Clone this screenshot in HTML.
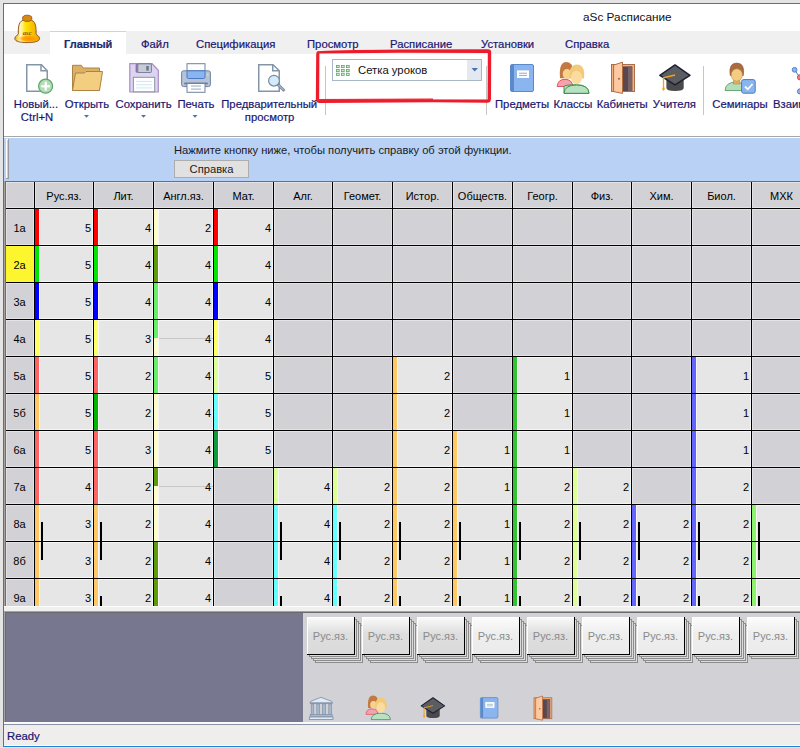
<!DOCTYPE html>
<html><head><meta charset="utf-8">
<style>
html,body{margin:0;padding:0;}
body{width:800px;height:748px;overflow:hidden;position:relative;background:#e4e4e4;font-family:"Liberation Sans",sans-serif;}
div,span,svg{position:absolute;}
span{white-space:nowrap;line-height:1;}
.win{left:3px;top:3px;width:820px;height:742px;border:1px solid #1883d7;border-right:none;background:#fff;}
.tab{font-size:11.3px;color:#1a1670;top:39px;-webkit-text-stroke:0.2px #1a1670;}
.rb{font-size:11.3px;color:#1a1670;-webkit-text-stroke:0.2px #1a1670;}
.grid{overflow:hidden;background:#d2d1d6;}
.grid div{position:absolute;}
.grid span{position:absolute;font-size:11px;color:#000;line-height:13px;}
.grid .hd{text-align:center;color:#000;}
.grid .rh{text-align:center;color:#000;}
.grid .val{text-align:right;}
</style></head><body>
<div class="win"></div>
<!-- title -->
<span style="left:583px;top:12px;font-size:11.8px;color:#111;">aSc Расписание</span>
<!-- tab strip -->
<div style="left:4px;top:31px;width:796px;height:23px;background:#f0f0f0;"></div>
<div style="left:50px;top:31px;width:76px;height:23px;background:#fff;border-top:1px solid #d2d2d2;box-sizing:border-box;"></div>
<span class="tab" style="left:64px;font-weight:bold;font-size:11px;color:#1b2f6e;">Главный</span>
<span class="tab" style="left:141px;">Файл</span>
<span class="tab" style="left:196px;">Спецификация</span>
<span class="tab" style="left:307px;">Просмотр</span>
<span class="tab" style="left:390px;">Расписание</span>
<span class="tab" style="left:481px;">Установки</span>
<span class="tab" style="left:565px;">Справка</span>
<svg style="left:0;top:0" width="60" height="60" viewBox="0 0 60 60">
<defs>
<linearGradient id="bg1" x1="0" x2="1" y1="0" y2="0">
<stop offset="0" stop-color="#f0a800"/><stop offset="0.22" stop-color="#fff8c0"/><stop offset="0.45" stop-color="#ffe000"/><stop offset="1" stop-color="#f0a000"/>
</linearGradient>
<radialGradient id="bg2" cx="0.5" cy="0.5" r="0.5">
<stop offset="0" stop-color="#ff8c00"/><stop offset="0.6" stop-color="#ff9c00" stop-opacity="0.8"/><stop offset="1" stop-color="#ffb000" stop-opacity="0"/>
</radialGradient>
</defs>
<path d="M18.3 33.5 C18 22.5 20.5 19.6 27.2 19.6 C34 19.6 36.4 22.5 36.1 33.5 C36 35.2 39.6 35.8 39.6 38.6 C39.6 41.6 33.5 42.6 27.2 42.6 C21 42.6 14.8 41.6 14.8 38.6 C14.8 35.8 18.5 35.2 18.5 33.5 Z" fill="url(#bg1)" stroke="#8a4a10" stroke-width="0.9"/>
<ellipse cx="28.5" cy="38.6" rx="10.5" ry="3.8" fill="url(#bg2)"/>
<ellipse cx="27.2" cy="18.3" rx="4.7" ry="3.1" fill="#d88a10" stroke="#8a4a10" stroke-width="0.8"/>
<text x="27.2" y="34.6" font-family="Liberation Serif" font-size="6.5" fill="#8a4a18" text-anchor="middle" font-weight="bold" font-style="italic">asc</text>
</svg>

<!-- ribbon -->
<div style="left:4px;top:136px;width:796px;height:1px;background:#a6a6a6;"></div>
<svg style="left:0;top:0" width="800" height="140" viewBox="0 0 800 140">
<!-- separators -->
<rect x="325" y="66" width="1" height="49" fill="#c6c6c6"/>
<rect x="486" y="66" width="1" height="49" fill="#c6c6c6"/>
<rect x="703" y="66" width="1" height="49" fill="#c6c6c6"/>
<!-- new doc -->
<path d="M26.75 64.75 H41.5 L47.25 70.75 V91.25 H26.75 Z" fill="#fff" stroke="#8595a8" stroke-width="1.5"/>
<path d="M41 65 V70.75 H47" fill="none" stroke="#8595a8" stroke-width="1.5"/>
<circle cx="45.6" cy="86.2" r="7" fill="#b2dbb6" stroke="#5aa56a" stroke-width="1.2"/>
<rect x="44.6" y="81.8" width="2.2" height="8.8" fill="#fff"/>
<rect x="41.2" y="85.2" width="8.8" height="2.2" fill="#fff"/>
<!-- folder -->
<path d="M72.5 65.3 H81.3 L83.2 68 H99.5 V90.5 H72.5 Z" fill="#ddb068" stroke="#ab8444" stroke-width="1"/>
<path d="M75.5 73 H84.5 L86 71.5 H102.5 L99.5 90.5 H72.5 Z" fill="#f3cd80" stroke="#ab8444" stroke-width="1"/>
<!-- floppy -->
<path d="M129.8 63.6 H152 L158.3 70.3 V92 H129.8 Z" fill="#ddd4f2" stroke="#a98cc4" stroke-width="1.2"/>
<rect x="135.6" y="63.6" width="16" height="9.2" rx="1.5" fill="#8e74ae"/>
<rect x="137.8" y="63.9" width="13.6" height="8.6" rx="1" fill="#c9ccd6" stroke="#7a8496" stroke-width="1"/>
<rect x="146.2" y="66" width="2.6" height="4.6" fill="#6a7890"/>
<rect x="133.4" y="77.3" width="21.3" height="14.5" fill="#fff" stroke="#8894a6" stroke-width="1"/>
<rect x="136" y="80.9" width="16" height="1" fill="#cde6f8"/>
<rect x="136" y="84.3" width="16" height="1" fill="#cde6f8"/>
<rect x="136" y="87.4" width="16" height="1" fill="#cde6f8"/>
<!-- printer -->
<rect x="187" y="63.7" width="18" height="8" fill="#fff" stroke="#6e82a0" stroke-width="1"/>
<rect x="181.6" y="70.8" width="28.8" height="15.8" rx="2" fill="#b5c3d9" stroke="#6e82a0" stroke-width="1"/>
<path d="M187 70.8 H205 V77 Q205 78.5 203.5 78.5 H188.5 Q187 78.5 187 77 Z" fill="#8ab5f0" stroke="#4b79c2" stroke-width="1"/>
<circle cx="207.6" cy="74.7" r="1" fill="#f7e06a"/>
<rect x="184" y="82.6" width="24" height="2" rx="1" fill="#6e82a0"/>
<rect x="187" y="83.5" width="18" height="8.8" fill="#fff" stroke="#6e82a0" stroke-width="1"/>
<rect x="191" y="85.5" width="10" height="1" fill="#9aaabb"/>
<rect x="191" y="88.6" width="10" height="1" fill="#9aaabb"/>
<!-- preview -->
<path d="M258.75 64.75 H273 L279.25 70.75 V91.25 H258.75 Z" fill="#fff" stroke="#8595a8" stroke-width="1.5"/>
<path d="M272.75 65 V70.75 H279" fill="none" stroke="#8595a8" stroke-width="1.5"/>
<line x1="278" y1="84.5" x2="283.5" y2="90" stroke="#7a8aa0" stroke-width="3" stroke-linecap="round"/>
<line x1="278" y1="84.5" x2="283.5" y2="90" stroke="#c0d4e6" stroke-width="1"/>
<circle cx="274" cy="80.7" r="5.4" fill="#d3ebfc" stroke="#7a8aa0" stroke-width="1.2"/>
<!-- combo -->
<rect x="332.5" y="59.5" width="149" height="21" fill="#fff" stroke="#a9b5c9" stroke-width="1"/>
<rect x="467" y="60" width="14" height="20" fill="#e4e8f1"/>
<path d="M471.5 68 H478 L474.75 71.5 Z" fill="#4a72b0"/>
<g fill="#d8eed8" stroke="#5fa467" stroke-width="0.8"><rect x="336.4" y="65.4" width="2.8" height="2.2"/><rect x="341.4" y="65.4" width="2.8" height="2.2"/><rect x="346.4" y="65.4" width="2.8" height="2.2"/><rect x="336.4" y="69.4" width="2.8" height="2.2"/><rect x="341.4" y="69.4" width="2.8" height="2.2"/><rect x="346.4" y="69.4" width="2.8" height="2.2"/><rect x="336.4" y="73.2" width="2.8" height="2.2"/><rect x="341.4" y="73.2" width="2.8" height="2.2"/><rect x="346.4" y="73.2" width="2.8" height="2.2"/></g>
<!-- dropdown arrows -->
<path d="M84 115 H89 L86.5 117.8 Z" fill="#4a72b0"/>
<path d="M141 115 H146 L143.5 117.8 Z" fill="#4a72b0"/>
<path d="M192.5 115 H197.5 L195 117.8 Z" fill="#4a72b0"/>
<!-- book -->
<rect x="510.5" y="64.5" width="23" height="27" rx="1.5" fill="#8ab5ee" stroke="#5b89c9" stroke-width="1"/>
<rect x="511" y="65" width="3" height="26" fill="#5b89c9"/>
<rect x="517" y="70.4" width="12" height="7.6" fill="#fff"/>
<rect x="519" y="72.7" width="8" height="1" fill="#9aabc2"/>
<rect x="519" y="74.9" width="8" height="1" fill="#9aabc2"/>
<!-- classes -->
<path d="M557.2 86.5 Q557.5 79.5 565 79.3 Q572.5 79.5 572.8 86.5 Z" fill="#f4a3ac" stroke="#e04656" stroke-width="0.9"/>
<path d="M560 78.3 Q558.5 62 566.5 62 Q573.5 62.5 573 72 L571 78.3 Z" fill="#c37a42"/>
<ellipse cx="567" cy="74" rx="4.3" ry="5" fill="#f8d28c"/>
<path d="M564 86.5 Q564.5 84.8 576.5 84.8 Q588.5 84.8 589 93.3 H564 Z" fill="#b8e1c2" stroke="#2c8c3e" stroke-width="0.9"/>
<path d="M564 93.3 Q564.5 85 576.5 85 Q588.5 85 589 93.3 Z" fill="#b8e1c2" stroke="#2c8c3e" stroke-width="0.9"/>
<path d="M569.5 78.5 Q568.5 64.5 577 64.5 Q585.5 64.8 584 78.5 Z" fill="#f2ca7c"/>
<ellipse cx="576.5" cy="77.5" rx="5.5" ry="6.8" fill="#fcdc9e"/>
<!-- door -->
<rect x="611.5" y="64.5" width="23" height="27" fill="#f2b282" stroke="#b26c42" stroke-width="1"/>
<rect x="622.8" y="66.4" width="9.6" height="24.6" fill="#5a484c"/>
<rect x="628" y="66.4" width="4" height="24.6" fill="#7a6268"/>
<path d="M613.6 65.1 L622.5 62.2 V93.4 L613.6 91.6 Z" fill="#fdc9a2" stroke="#b26c42" stroke-width="1"/>
<circle cx="619" cy="78.8" r="1" fill="#a06040"/>
<!-- hat -->
<path d="M666.4 79.8 V88 Q666.4 91 675 91 Q683.7 91 683.7 88 V79.8 Z" fill="#4a4a4c"/>
<path d="M675 64.9 L690 75.3 L675 84.9 L659.8 75.3 Z" fill="#5b5d61" stroke="#1b2131" stroke-width="1.4" stroke-linejoin="round"/>
<path d="M675 75 L663.5 77.8 V88" fill="none" stroke="#f2a222" stroke-width="1.3"/>
<path d="M663.5 86 L665 89 L663.5 91 L662 89 Z" fill="#f2a222"/>
<!-- seminar -->
<path d="M725 90.5 Q725.5 82 736.5 82 Q744 82 744 90.5 Z" fill="#b5ddb9" stroke="#5aa26a" stroke-width="0.9"/>
<path d="M730.2 75.5 Q728.2 63 736.8 63 Q745.2 63 743.4 75.5 Z" fill="#a96b41" stroke="#8a5030" stroke-width="0.5"/>
<rect x="733.5" y="78" width="6.4" height="6" fill="#e2ae5e" stroke="#b08040" stroke-width="0.5"/>
<ellipse cx="736.8" cy="75" rx="5.6" ry="6.2" fill="#f5cd80" stroke="#b08040" stroke-width="0.5"/>
<rect x="741.6" y="79.6" width="13.6" height="13.6" rx="2" fill="#8ab5ee" stroke="#4b79c2" stroke-width="1"/>
<path d="M745 86.5 L747.8 89.3 L752.5 84" fill="none" stroke="#fff" stroke-width="1.8"/>
<!-- network partial -->
<line x1="794.6" y1="69.8" x2="799.7" y2="77.3" stroke="#4b79c2" stroke-width="1"/>
<circle cx="794.6" cy="69.8" r="2.4" fill="#8ab5ee" stroke="#4b79c2" stroke-width="0.9"/>
<circle cx="800" cy="77.3" r="2.6" fill="#f07a80" stroke="#d64050" stroke-width="0.9"/>
<circle cx="800" cy="91.4" r="2.6" fill="#8ab5ee" stroke="#4b79c2" stroke-width="0.9"/>
<!-- red annotation -->
<g fill="#ec1c2c">
<path d="M317.5 51.2 Q330 50.2 400 49.6 L488 49.2 Q491.2 49.4 491.2 52.2 L491 98.8 Q490.8 102.8 487.5 102.8 L433 102.2 L320 103 Q316 103 315.8 99.5 L316.2 53.8 Q316.6 51.4 317.5 51.2 Z M319.4 53.6 L319.2 99.2 L487.6 99.6 L487.8 53 L400 52.8 Z" fill-rule="evenodd"/>
<path d="M316 99 L433 98.6 L433 100 L316 100.6 Z" fill="#ee2834"/>
</g>
</svg>
<span class="rb" style="left:6px;top:99px;width:60px;text-align:center;">Новый...</span>
<span class="rb" style="left:7px;top:112px;width:60px;text-align:center;">Ctrl+N</span>
<span class="rb" style="left:57px;top:99px;width:60px;text-align:center;">Открыть</span>
<span class="rb" style="left:113.6px;top:99px;width:60px;text-align:center;">Сохранить</span>
<span class="rb" style="left:166px;top:99px;width:60px;text-align:center;">Печать</span>
<span class="rb" style="left:219.2px;top:99px;width:100px;text-align:center;">Предварительный</span>
<span class="rb" style="left:219.6px;top:112px;width:100px;text-align:center;">просмотр</span>
<span style="left:358px;top:65px;font-size:11.3px;color:#111;">Сетка уроков</span>
<span class="rb" style="left:492px;top:99px;width:60px;text-align:center;">Предметы</span>
<span class="rb" style="left:542.9px;top:99px;width:60px;text-align:center;">Классы</span>
<span class="rb" style="left:592.2px;top:99px;width:60px;text-align:center;">Кабинеты</span>
<span class="rb" style="left:644.4px;top:99px;width:60px;text-align:center;">Учителя</span>
<span class="rb" style="left:710px;top:99px;width:60px;text-align:center;">Семинары</span>
<span class="rb" style="left:773px;top:99px;">Взаимо</span>

<!-- help bar -->
<div style="left:4px;top:137px;width:796px;height:1px;background:#fff;"></div>
<div style="left:4px;top:138px;width:796px;height:43px;background:#b9d1f5;"></div>
<div style="left:6px;top:139px;width:1px;height:39px;background:#fff;"></div><div style="left:6px;top:139px;width:2px;height:1px;background:#fff;"></div><div style="left:8px;top:139px;width:1px;height:40px;background:#9a9a9a;"></div><div style="left:6px;top:178px;width:3px;height:1px;background:#9a9a9a;"></div>
<span style="left:174px;top:145px;font-size:11.2px;color:#1a1a1a;">Нажмите кнопку ниже, чтобы получить справку об этой функции.</span>
<div style="left:174px;top:160px;width:75px;height:18px;background:#e1e1e1;border:1px solid #adadad;box-sizing:border-box;"></div>
<span style="left:174px;top:164px;width:75px;text-align:center;font-size:11.2px;color:#1a1a1a;">Справка</span>
<div style="left:4px;top:181px;width:1px;height:425px;background:#a8a29c;"></div>
<div class="grid" style="left:5px;top:181px;width:795px;height:425px">
<div style="left:1px;top:1px;width:28px;height:26px;background:#d2d1d6;box-shadow:inset 0 0 0 1px #e3e2e7"></div>
<div style="left:30px;top:1px;width:58px;height:26px;background:#d2d1d6;box-shadow:inset 0 0 0 1px #e3e2e7"></div>
<div style="left:89px;top:1px;width:59px;height:26px;background:#d2d1d6;box-shadow:inset 0 0 0 1px #e3e2e7"></div>
<div style="left:149px;top:1px;width:59px;height:26px;background:#d2d1d6;box-shadow:inset 0 0 0 1px #e3e2e7"></div>
<div style="left:209px;top:1px;width:59px;height:26px;background:#d2d1d6;box-shadow:inset 0 0 0 1px #e3e2e7"></div>
<div style="left:269px;top:1px;width:58px;height:26px;background:#d2d1d6;box-shadow:inset 0 0 0 1px #e3e2e7"></div>
<div style="left:328px;top:1px;width:59px;height:26px;background:#d2d1d6;box-shadow:inset 0 0 0 1px #e3e2e7"></div>
<div style="left:388px;top:1px;width:59px;height:26px;background:#d2d1d6;box-shadow:inset 0 0 0 1px #e3e2e7"></div>
<div style="left:448px;top:1px;width:59px;height:26px;background:#d2d1d6;box-shadow:inset 0 0 0 1px #e3e2e7"></div>
<div style="left:508px;top:1px;width:59px;height:26px;background:#d2d1d6;box-shadow:inset 0 0 0 1px #e3e2e7"></div>
<div style="left:568px;top:1px;width:58px;height:26px;background:#d2d1d6;box-shadow:inset 0 0 0 1px #e3e2e7"></div>
<div style="left:627px;top:1px;width:59px;height:26px;background:#d2d1d6;box-shadow:inset 0 0 0 1px #e3e2e7"></div>
<div style="left:687px;top:1px;width:59px;height:26px;background:#d2d1d6;box-shadow:inset 0 0 0 1px #e3e2e7"></div>
<div style="left:747px;top:1px;width:59px;height:26px;background:#d2d1d6;box-shadow:inset 0 0 0 1px #e3e2e7"></div>
<div style="left:1px;top:28px;width:28px;height:36px;background:#d2d1d6;box-shadow:inset 0 0 0 1px #e3e2e7"></div>
<span class="rh" style="left:0px;top:41px;width:29px">1a</span>
<div style="left:30px;top:28px;width:58px;height:36px;background:#e6e6e6;box-shadow:inset 0 0 0 1px #f6f6f6"></div>
<div style="left:30px;top:28px;width:4px;height:36px;background:#ff0000"></div>
<div style="left:34px;top:28px;width:1px;height:36px;background:#f6f6f6"></div>
<span class="val" style="left:30px;top:41px;width:56px">5</span>
<div style="left:89px;top:28px;width:59px;height:36px;background:#e6e6e6;box-shadow:inset 0 0 0 1px #f6f6f6"></div>
<div style="left:89px;top:28px;width:4px;height:36px;background:#ff0000"></div>
<div style="left:93px;top:28px;width:1px;height:36px;background:#f6f6f6"></div>
<span class="val" style="left:89px;top:41px;width:57px">4</span>
<div style="left:149px;top:28px;width:59px;height:36px;background:#e6e6e6;box-shadow:inset 0 0 0 1px #f6f6f6"></div>
<div style="left:149px;top:28px;width:4px;height:36px;background:#fffcc6"></div>
<div style="left:153px;top:28px;width:1px;height:36px;background:#f6f6f6"></div>
<span class="val" style="left:149px;top:41px;width:57px">2</span>
<div style="left:209px;top:28px;width:59px;height:36px;background:#e6e6e6;box-shadow:inset 0 0 0 1px #f6f6f6"></div>
<div style="left:209px;top:28px;width:4px;height:36px;background:#ff0000"></div>
<div style="left:213px;top:28px;width:1px;height:36px;background:#f6f6f6"></div>
<span class="val" style="left:209px;top:41px;width:57px">4</span>
<div style="left:269px;top:28px;width:58px;height:36px;background:#d2d1d6;box-shadow:inset 0 0 0 1px #e3e2e7"></div>
<div style="left:328px;top:28px;width:59px;height:36px;background:#d2d1d6;box-shadow:inset 0 0 0 1px #e3e2e7"></div>
<div style="left:388px;top:28px;width:59px;height:36px;background:#d2d1d6;box-shadow:inset 0 0 0 1px #e3e2e7"></div>
<div style="left:448px;top:28px;width:59px;height:36px;background:#d2d1d6;box-shadow:inset 0 0 0 1px #e3e2e7"></div>
<div style="left:508px;top:28px;width:59px;height:36px;background:#d2d1d6;box-shadow:inset 0 0 0 1px #e3e2e7"></div>
<div style="left:568px;top:28px;width:58px;height:36px;background:#d2d1d6;box-shadow:inset 0 0 0 1px #e3e2e7"></div>
<div style="left:627px;top:28px;width:59px;height:36px;background:#d2d1d6;box-shadow:inset 0 0 0 1px #e3e2e7"></div>
<div style="left:687px;top:28px;width:59px;height:36px;background:#d2d1d6;box-shadow:inset 0 0 0 1px #e3e2e7"></div>
<div style="left:747px;top:28px;width:59px;height:36px;background:#d2d1d6;box-shadow:inset 0 0 0 1px #e3e2e7"></div>
<div style="left:1px;top:65px;width:28px;height:36px;background:#fdf62e"></div>
<span class="rh" style="left:0px;top:78px;width:29px">2a</span>
<div style="left:30px;top:65px;width:58px;height:36px;background:#e6e6e6;box-shadow:inset 0 0 0 1px #f6f6f6"></div>
<div style="left:30px;top:65px;width:4px;height:36px;background:#00e600"></div>
<div style="left:34px;top:65px;width:1px;height:36px;background:#f6f6f6"></div>
<span class="val" style="left:30px;top:78px;width:56px">5</span>
<div style="left:89px;top:65px;width:59px;height:36px;background:#e6e6e6;box-shadow:inset 0 0 0 1px #f6f6f6"></div>
<div style="left:89px;top:65px;width:4px;height:36px;background:#00e600"></div>
<div style="left:93px;top:65px;width:1px;height:36px;background:#f6f6f6"></div>
<span class="val" style="left:89px;top:78px;width:57px">4</span>
<div style="left:149px;top:65px;width:59px;height:36px;background:#e6e6e6;box-shadow:inset 0 0 0 1px #f6f6f6"></div>
<div style="left:149px;top:65px;width:4px;height:36px;background:#5e9a0a"></div>
<div style="left:153px;top:65px;width:1px;height:36px;background:#f6f6f6"></div>
<span class="val" style="left:149px;top:78px;width:57px">4</span>
<div style="left:209px;top:65px;width:59px;height:36px;background:#e6e6e6;box-shadow:inset 0 0 0 1px #f6f6f6"></div>
<div style="left:209px;top:65px;width:4px;height:36px;background:#00e600"></div>
<div style="left:213px;top:65px;width:1px;height:36px;background:#f6f6f6"></div>
<span class="val" style="left:209px;top:78px;width:57px">4</span>
<div style="left:269px;top:65px;width:58px;height:36px;background:#d2d1d6;box-shadow:inset 0 0 0 1px #e3e2e7"></div>
<div style="left:328px;top:65px;width:59px;height:36px;background:#d2d1d6;box-shadow:inset 0 0 0 1px #e3e2e7"></div>
<div style="left:388px;top:65px;width:59px;height:36px;background:#d2d1d6;box-shadow:inset 0 0 0 1px #e3e2e7"></div>
<div style="left:448px;top:65px;width:59px;height:36px;background:#d2d1d6;box-shadow:inset 0 0 0 1px #e3e2e7"></div>
<div style="left:508px;top:65px;width:59px;height:36px;background:#d2d1d6;box-shadow:inset 0 0 0 1px #e3e2e7"></div>
<div style="left:568px;top:65px;width:58px;height:36px;background:#d2d1d6;box-shadow:inset 0 0 0 1px #e3e2e7"></div>
<div style="left:627px;top:65px;width:59px;height:36px;background:#d2d1d6;box-shadow:inset 0 0 0 1px #e3e2e7"></div>
<div style="left:687px;top:65px;width:59px;height:36px;background:#d2d1d6;box-shadow:inset 0 0 0 1px #e3e2e7"></div>
<div style="left:747px;top:65px;width:59px;height:36px;background:#d2d1d6;box-shadow:inset 0 0 0 1px #e3e2e7"></div>
<div style="left:1px;top:102px;width:28px;height:36px;background:#d2d1d6;box-shadow:inset 0 0 0 1px #e3e2e7"></div>
<span class="rh" style="left:0px;top:115px;width:29px">3a</span>
<div style="left:30px;top:102px;width:58px;height:36px;background:#e6e6e6;box-shadow:inset 0 0 0 1px #f6f6f6"></div>
<div style="left:30px;top:102px;width:4px;height:36px;background:#0000ff"></div>
<div style="left:34px;top:102px;width:1px;height:36px;background:#f6f6f6"></div>
<span class="val" style="left:30px;top:115px;width:56px">5</span>
<div style="left:89px;top:102px;width:59px;height:36px;background:#e6e6e6;box-shadow:inset 0 0 0 1px #f6f6f6"></div>
<div style="left:89px;top:102px;width:4px;height:36px;background:#0000ff"></div>
<div style="left:93px;top:102px;width:1px;height:36px;background:#f6f6f6"></div>
<span class="val" style="left:89px;top:115px;width:57px">4</span>
<div style="left:149px;top:102px;width:59px;height:36px;background:#e6e6e6;box-shadow:inset 0 0 0 1px #f6f6f6"></div>
<div style="left:149px;top:102px;width:4px;height:36px;background:#66f066"></div>
<div style="left:153px;top:102px;width:1px;height:36px;background:#f6f6f6"></div>
<span class="val" style="left:149px;top:115px;width:57px">4</span>
<div style="left:209px;top:102px;width:59px;height:36px;background:#e6e6e6;box-shadow:inset 0 0 0 1px #f6f6f6"></div>
<div style="left:209px;top:102px;width:4px;height:36px;background:#0000ff"></div>
<div style="left:213px;top:102px;width:1px;height:36px;background:#f6f6f6"></div>
<span class="val" style="left:209px;top:115px;width:57px">4</span>
<div style="left:269px;top:102px;width:58px;height:36px;background:#d2d1d6;box-shadow:inset 0 0 0 1px #e3e2e7"></div>
<div style="left:328px;top:102px;width:59px;height:36px;background:#d2d1d6;box-shadow:inset 0 0 0 1px #e3e2e7"></div>
<div style="left:388px;top:102px;width:59px;height:36px;background:#d2d1d6;box-shadow:inset 0 0 0 1px #e3e2e7"></div>
<div style="left:448px;top:102px;width:59px;height:36px;background:#d2d1d6;box-shadow:inset 0 0 0 1px #e3e2e7"></div>
<div style="left:508px;top:102px;width:59px;height:36px;background:#d2d1d6;box-shadow:inset 0 0 0 1px #e3e2e7"></div>
<div style="left:568px;top:102px;width:58px;height:36px;background:#d2d1d6;box-shadow:inset 0 0 0 1px #e3e2e7"></div>
<div style="left:627px;top:102px;width:59px;height:36px;background:#d2d1d6;box-shadow:inset 0 0 0 1px #e3e2e7"></div>
<div style="left:687px;top:102px;width:59px;height:36px;background:#d2d1d6;box-shadow:inset 0 0 0 1px #e3e2e7"></div>
<div style="left:747px;top:102px;width:59px;height:36px;background:#d2d1d6;box-shadow:inset 0 0 0 1px #e3e2e7"></div>
<div style="left:1px;top:139px;width:28px;height:36px;background:#d2d1d6;box-shadow:inset 0 0 0 1px #e3e2e7"></div>
<span class="rh" style="left:0px;top:152px;width:29px">4a</span>
<div style="left:30px;top:139px;width:58px;height:36px;background:#e6e6e6;box-shadow:inset 0 0 0 1px #f6f6f6"></div>
<div style="left:30px;top:139px;width:4px;height:36px;background:#ffff66"></div>
<div style="left:34px;top:139px;width:1px;height:36px;background:#f6f6f6"></div>
<span class="val" style="left:30px;top:152px;width:56px">5</span>
<div style="left:89px;top:139px;width:59px;height:36px;background:#e6e6e6;box-shadow:inset 0 0 0 1px #f6f6f6"></div>
<div style="left:89px;top:139px;width:4px;height:36px;background:#ffff66"></div>
<div style="left:93px;top:139px;width:1px;height:36px;background:#f6f6f6"></div>
<span class="val" style="left:89px;top:152px;width:57px">3</span>
<div style="left:149px;top:139px;width:59px;height:36px;background:#e6e6e6;box-shadow:inset 0 0 0 1px #f6f6f6"></div>
<div style="left:149px;top:139px;width:4px;height:18px;background:#66f066"></div>
<div style="left:149px;top:157px;width:4px;height:18px;background:#fffcc6"></div>
<div style="left:153px;top:157px;width:55px;height:1px;background:#c8c8c8"></div>
<div style="left:153px;top:139px;width:1px;height:36px;background:#f6f6f6"></div>
<span class="val" style="left:149px;top:152px;width:57px">4</span>
<div style="left:209px;top:139px;width:59px;height:36px;background:#e6e6e6;box-shadow:inset 0 0 0 1px #f6f6f6"></div>
<div style="left:209px;top:139px;width:4px;height:36px;background:#ffff66"></div>
<div style="left:213px;top:139px;width:1px;height:36px;background:#f6f6f6"></div>
<span class="val" style="left:209px;top:152px;width:57px">4</span>
<div style="left:269px;top:139px;width:58px;height:36px;background:#d2d1d6;box-shadow:inset 0 0 0 1px #e3e2e7"></div>
<div style="left:328px;top:139px;width:59px;height:36px;background:#d2d1d6;box-shadow:inset 0 0 0 1px #e3e2e7"></div>
<div style="left:388px;top:139px;width:59px;height:36px;background:#d2d1d6;box-shadow:inset 0 0 0 1px #e3e2e7"></div>
<div style="left:448px;top:139px;width:59px;height:36px;background:#d2d1d6;box-shadow:inset 0 0 0 1px #e3e2e7"></div>
<div style="left:508px;top:139px;width:59px;height:36px;background:#d2d1d6;box-shadow:inset 0 0 0 1px #e3e2e7"></div>
<div style="left:568px;top:139px;width:58px;height:36px;background:#d2d1d6;box-shadow:inset 0 0 0 1px #e3e2e7"></div>
<div style="left:627px;top:139px;width:59px;height:36px;background:#d2d1d6;box-shadow:inset 0 0 0 1px #e3e2e7"></div>
<div style="left:687px;top:139px;width:59px;height:36px;background:#d2d1d6;box-shadow:inset 0 0 0 1px #e3e2e7"></div>
<div style="left:747px;top:139px;width:59px;height:36px;background:#d2d1d6;box-shadow:inset 0 0 0 1px #e3e2e7"></div>
<div style="left:1px;top:176px;width:28px;height:36px;background:#d2d1d6;box-shadow:inset 0 0 0 1px #e3e2e7"></div>
<span class="rh" style="left:0px;top:189px;width:29px">5a</span>
<div style="left:30px;top:176px;width:58px;height:36px;background:#e6e6e6;box-shadow:inset 0 0 0 1px #f6f6f6"></div>
<div style="left:30px;top:176px;width:4px;height:36px;background:#ff6464"></div>
<div style="left:34px;top:176px;width:1px;height:36px;background:#f6f6f6"></div>
<span class="val" style="left:30px;top:189px;width:56px">5</span>
<div style="left:89px;top:176px;width:59px;height:36px;background:#e6e6e6;box-shadow:inset 0 0 0 1px #f6f6f6"></div>
<div style="left:89px;top:176px;width:4px;height:36px;background:#ff6464"></div>
<div style="left:93px;top:176px;width:1px;height:36px;background:#f6f6f6"></div>
<span class="val" style="left:89px;top:189px;width:57px">2</span>
<div style="left:149px;top:176px;width:59px;height:36px;background:#e6e6e6;box-shadow:inset 0 0 0 1px #f6f6f6"></div>
<div style="left:149px;top:176px;width:4px;height:36px;background:#66f066"></div>
<div style="left:153px;top:176px;width:1px;height:36px;background:#f6f6f6"></div>
<span class="val" style="left:149px;top:189px;width:57px">4</span>
<div style="left:209px;top:176px;width:59px;height:36px;background:#e6e6e6;box-shadow:inset 0 0 0 1px #f6f6f6"></div>
<div style="left:209px;top:176px;width:4px;height:36px;background:#dcff96"></div>
<div style="left:213px;top:176px;width:1px;height:36px;background:#f6f6f6"></div>
<span class="val" style="left:209px;top:189px;width:57px">5</span>
<div style="left:269px;top:176px;width:58px;height:36px;background:#d2d1d6;box-shadow:inset 0 0 0 1px #e3e2e7"></div>
<div style="left:328px;top:176px;width:59px;height:36px;background:#d2d1d6;box-shadow:inset 0 0 0 1px #e3e2e7"></div>
<div style="left:388px;top:176px;width:59px;height:36px;background:#e6e6e6;box-shadow:inset 0 0 0 1px #f6f6f6"></div>
<div style="left:388px;top:176px;width:4px;height:36px;background:#ffc864"></div>
<div style="left:392px;top:176px;width:1px;height:36px;background:#f6f6f6"></div>
<span class="val" style="left:388px;top:189px;width:57px">2</span>
<div style="left:448px;top:176px;width:59px;height:36px;background:#d2d1d6;box-shadow:inset 0 0 0 1px #e3e2e7"></div>
<div style="left:508px;top:176px;width:59px;height:36px;background:#e6e6e6;box-shadow:inset 0 0 0 1px #f6f6f6"></div>
<div style="left:508px;top:176px;width:4px;height:36px;background:#33c433"></div>
<div style="left:512px;top:176px;width:1px;height:36px;background:#f6f6f6"></div>
<span class="val" style="left:508px;top:189px;width:57px">1</span>
<div style="left:568px;top:176px;width:58px;height:36px;background:#d2d1d6;box-shadow:inset 0 0 0 1px #e3e2e7"></div>
<div style="left:627px;top:176px;width:59px;height:36px;background:#d2d1d6;box-shadow:inset 0 0 0 1px #e3e2e7"></div>
<div style="left:687px;top:176px;width:59px;height:36px;background:#e6e6e6;box-shadow:inset 0 0 0 1px #f6f6f6"></div>
<div style="left:687px;top:176px;width:4px;height:36px;background:#6464ff"></div>
<div style="left:691px;top:176px;width:1px;height:36px;background:#f6f6f6"></div>
<span class="val" style="left:687px;top:189px;width:57px">1</span>
<div style="left:747px;top:176px;width:59px;height:36px;background:#d2d1d6;box-shadow:inset 0 0 0 1px #e3e2e7"></div>
<div style="left:1px;top:213px;width:28px;height:36px;background:#d2d1d6;box-shadow:inset 0 0 0 1px #e3e2e7"></div>
<span class="rh" style="left:0px;top:226px;width:29px">5б</span>
<div style="left:30px;top:213px;width:58px;height:36px;background:#e6e6e6;box-shadow:inset 0 0 0 1px #f6f6f6"></div>
<div style="left:30px;top:213px;width:4px;height:36px;background:#ffc864"></div>
<div style="left:34px;top:213px;width:1px;height:36px;background:#f6f6f6"></div>
<span class="val" style="left:30px;top:226px;width:56px">5</span>
<div style="left:89px;top:213px;width:59px;height:36px;background:#e6e6e6;box-shadow:inset 0 0 0 1px #f6f6f6"></div>
<div style="left:89px;top:213px;width:4px;height:36px;background:#00b400"></div>
<div style="left:93px;top:213px;width:1px;height:36px;background:#f6f6f6"></div>
<span class="val" style="left:89px;top:226px;width:57px">2</span>
<div style="left:149px;top:213px;width:59px;height:36px;background:#e6e6e6;box-shadow:inset 0 0 0 1px #f6f6f6"></div>
<div style="left:149px;top:213px;width:4px;height:36px;background:#fffcc6"></div>
<div style="left:153px;top:213px;width:1px;height:36px;background:#f6f6f6"></div>
<span class="val" style="left:149px;top:226px;width:57px">4</span>
<div style="left:209px;top:213px;width:59px;height:36px;background:#e6e6e6;box-shadow:inset 0 0 0 1px #f6f6f6"></div>
<div style="left:209px;top:213px;width:4px;height:36px;background:#66ffff"></div>
<div style="left:213px;top:213px;width:1px;height:36px;background:#f6f6f6"></div>
<span class="val" style="left:209px;top:226px;width:57px">5</span>
<div style="left:269px;top:213px;width:58px;height:36px;background:#d2d1d6;box-shadow:inset 0 0 0 1px #e3e2e7"></div>
<div style="left:328px;top:213px;width:59px;height:36px;background:#d2d1d6;box-shadow:inset 0 0 0 1px #e3e2e7"></div>
<div style="left:388px;top:213px;width:59px;height:36px;background:#e6e6e6;box-shadow:inset 0 0 0 1px #f6f6f6"></div>
<div style="left:388px;top:213px;width:4px;height:36px;background:#ffc864"></div>
<div style="left:392px;top:213px;width:1px;height:36px;background:#f6f6f6"></div>
<span class="val" style="left:388px;top:226px;width:57px">2</span>
<div style="left:448px;top:213px;width:59px;height:36px;background:#d2d1d6;box-shadow:inset 0 0 0 1px #e3e2e7"></div>
<div style="left:508px;top:213px;width:59px;height:36px;background:#e6e6e6;box-shadow:inset 0 0 0 1px #f6f6f6"></div>
<div style="left:508px;top:213px;width:4px;height:36px;background:#33c433"></div>
<div style="left:512px;top:213px;width:1px;height:36px;background:#f6f6f6"></div>
<span class="val" style="left:508px;top:226px;width:57px">1</span>
<div style="left:568px;top:213px;width:58px;height:36px;background:#d2d1d6;box-shadow:inset 0 0 0 1px #e3e2e7"></div>
<div style="left:627px;top:213px;width:59px;height:36px;background:#d2d1d6;box-shadow:inset 0 0 0 1px #e3e2e7"></div>
<div style="left:687px;top:213px;width:59px;height:36px;background:#e6e6e6;box-shadow:inset 0 0 0 1px #f6f6f6"></div>
<div style="left:687px;top:213px;width:4px;height:36px;background:#6464ff"></div>
<div style="left:691px;top:213px;width:1px;height:36px;background:#f6f6f6"></div>
<span class="val" style="left:687px;top:226px;width:57px">1</span>
<div style="left:747px;top:213px;width:59px;height:36px;background:#d2d1d6;box-shadow:inset 0 0 0 1px #e3e2e7"></div>
<div style="left:1px;top:250px;width:28px;height:36px;background:#d2d1d6;box-shadow:inset 0 0 0 1px #e3e2e7"></div>
<span class="rh" style="left:0px;top:263px;width:29px">6a</span>
<div style="left:30px;top:250px;width:58px;height:36px;background:#e6e6e6;box-shadow:inset 0 0 0 1px #f6f6f6"></div>
<div style="left:30px;top:250px;width:4px;height:36px;background:#ff6464"></div>
<div style="left:34px;top:250px;width:1px;height:36px;background:#f6f6f6"></div>
<span class="val" style="left:30px;top:263px;width:56px">5</span>
<div style="left:89px;top:250px;width:59px;height:36px;background:#e6e6e6;box-shadow:inset 0 0 0 1px #f6f6f6"></div>
<div style="left:89px;top:250px;width:4px;height:36px;background:#ff6464"></div>
<div style="left:93px;top:250px;width:1px;height:36px;background:#f6f6f6"></div>
<span class="val" style="left:89px;top:263px;width:57px">3</span>
<div style="left:149px;top:250px;width:59px;height:36px;background:#e6e6e6;box-shadow:inset 0 0 0 1px #f6f6f6"></div>
<div style="left:149px;top:250px;width:4px;height:36px;background:#fffcc6"></div>
<div style="left:153px;top:250px;width:1px;height:36px;background:#f6f6f6"></div>
<span class="val" style="left:149px;top:263px;width:57px">4</span>
<div style="left:209px;top:250px;width:59px;height:36px;background:#e6e6e6;box-shadow:inset 0 0 0 1px #f6f6f6"></div>
<div style="left:209px;top:250px;width:4px;height:36px;background:#109a3c"></div>
<div style="left:213px;top:250px;width:1px;height:36px;background:#f6f6f6"></div>
<span class="val" style="left:209px;top:263px;width:57px">5</span>
<div style="left:269px;top:250px;width:58px;height:36px;background:#d2d1d6;box-shadow:inset 0 0 0 1px #e3e2e7"></div>
<div style="left:328px;top:250px;width:59px;height:36px;background:#d2d1d6;box-shadow:inset 0 0 0 1px #e3e2e7"></div>
<div style="left:388px;top:250px;width:59px;height:36px;background:#e6e6e6;box-shadow:inset 0 0 0 1px #f6f6f6"></div>
<div style="left:388px;top:250px;width:4px;height:36px;background:#ffc864"></div>
<div style="left:392px;top:250px;width:1px;height:36px;background:#f6f6f6"></div>
<span class="val" style="left:388px;top:263px;width:57px">2</span>
<div style="left:448px;top:250px;width:59px;height:36px;background:#e6e6e6;box-shadow:inset 0 0 0 1px #f6f6f6"></div>
<div style="left:448px;top:250px;width:4px;height:36px;background:#ffc864"></div>
<div style="left:452px;top:250px;width:1px;height:36px;background:#f6f6f6"></div>
<span class="val" style="left:448px;top:263px;width:57px">1</span>
<div style="left:508px;top:250px;width:59px;height:36px;background:#e6e6e6;box-shadow:inset 0 0 0 1px #f6f6f6"></div>
<div style="left:508px;top:250px;width:4px;height:36px;background:#33c433"></div>
<div style="left:512px;top:250px;width:1px;height:36px;background:#f6f6f6"></div>
<span class="val" style="left:508px;top:263px;width:57px">1</span>
<div style="left:568px;top:250px;width:58px;height:36px;background:#d2d1d6;box-shadow:inset 0 0 0 1px #e3e2e7"></div>
<div style="left:627px;top:250px;width:59px;height:36px;background:#d2d1d6;box-shadow:inset 0 0 0 1px #e3e2e7"></div>
<div style="left:687px;top:250px;width:59px;height:36px;background:#e6e6e6;box-shadow:inset 0 0 0 1px #f6f6f6"></div>
<div style="left:687px;top:250px;width:4px;height:36px;background:#6464ff"></div>
<div style="left:691px;top:250px;width:1px;height:36px;background:#f6f6f6"></div>
<span class="val" style="left:687px;top:263px;width:57px">1</span>
<div style="left:747px;top:250px;width:59px;height:36px;background:#d2d1d6;box-shadow:inset 0 0 0 1px #e3e2e7"></div>
<div style="left:1px;top:287px;width:28px;height:36px;background:#d2d1d6;box-shadow:inset 0 0 0 1px #e3e2e7"></div>
<span class="rh" style="left:0px;top:300px;width:29px">7a</span>
<div style="left:30px;top:287px;width:58px;height:36px;background:#e6e6e6;box-shadow:inset 0 0 0 1px #f6f6f6"></div>
<div style="left:30px;top:287px;width:4px;height:36px;background:#ff6464"></div>
<div style="left:34px;top:287px;width:1px;height:36px;background:#f6f6f6"></div>
<span class="val" style="left:30px;top:300px;width:56px">4</span>
<div style="left:89px;top:287px;width:59px;height:36px;background:#e6e6e6;box-shadow:inset 0 0 0 1px #f6f6f6"></div>
<div style="left:89px;top:287px;width:4px;height:36px;background:#ff6464"></div>
<div style="left:93px;top:287px;width:1px;height:36px;background:#f6f6f6"></div>
<span class="val" style="left:89px;top:300px;width:57px">2</span>
<div style="left:149px;top:287px;width:59px;height:36px;background:#e6e6e6;box-shadow:inset 0 0 0 1px #f6f6f6"></div>
<div style="left:149px;top:287px;width:4px;height:18px;background:#5e9a0a"></div>
<div style="left:149px;top:305px;width:4px;height:18px;background:#fffcc6"></div>
<div style="left:153px;top:305px;width:55px;height:1px;background:#c8c8c8"></div>
<div style="left:153px;top:287px;width:1px;height:36px;background:#f6f6f6"></div>
<span class="val" style="left:149px;top:300px;width:57px">4</span>
<div style="left:209px;top:287px;width:59px;height:36px;background:#d2d1d6;box-shadow:inset 0 0 0 1px #e3e2e7"></div>
<div style="left:269px;top:287px;width:58px;height:36px;background:#e6e6e6;box-shadow:inset 0 0 0 1px #f6f6f6"></div>
<div style="left:269px;top:287px;width:4px;height:36px;background:#dcff96"></div>
<div style="left:273px;top:287px;width:1px;height:36px;background:#f6f6f6"></div>
<span class="val" style="left:269px;top:300px;width:56px">4</span>
<div style="left:328px;top:287px;width:59px;height:36px;background:#e6e6e6;box-shadow:inset 0 0 0 1px #f6f6f6"></div>
<div style="left:328px;top:287px;width:4px;height:36px;background:#dcff96"></div>
<div style="left:332px;top:287px;width:1px;height:36px;background:#f6f6f6"></div>
<span class="val" style="left:328px;top:300px;width:57px">2</span>
<div style="left:388px;top:287px;width:59px;height:36px;background:#e6e6e6;box-shadow:inset 0 0 0 1px #f6f6f6"></div>
<div style="left:388px;top:287px;width:4px;height:36px;background:#ffc864"></div>
<div style="left:392px;top:287px;width:1px;height:36px;background:#f6f6f6"></div>
<span class="val" style="left:388px;top:300px;width:57px">2</span>
<div style="left:448px;top:287px;width:59px;height:36px;background:#e6e6e6;box-shadow:inset 0 0 0 1px #f6f6f6"></div>
<div style="left:448px;top:287px;width:4px;height:36px;background:#ffc864"></div>
<div style="left:452px;top:287px;width:1px;height:36px;background:#f6f6f6"></div>
<span class="val" style="left:448px;top:300px;width:57px">1</span>
<div style="left:508px;top:287px;width:59px;height:36px;background:#e6e6e6;box-shadow:inset 0 0 0 1px #f6f6f6"></div>
<div style="left:508px;top:287px;width:4px;height:36px;background:#33c433"></div>
<div style="left:512px;top:287px;width:1px;height:36px;background:#f6f6f6"></div>
<span class="val" style="left:508px;top:300px;width:57px">2</span>
<div style="left:568px;top:287px;width:58px;height:36px;background:#e6e6e6;box-shadow:inset 0 0 0 1px #f6f6f6"></div>
<div style="left:568px;top:287px;width:4px;height:36px;background:#dcff96"></div>
<div style="left:572px;top:287px;width:1px;height:36px;background:#f6f6f6"></div>
<span class="val" style="left:568px;top:300px;width:56px">2</span>
<div style="left:627px;top:287px;width:59px;height:36px;background:#d2d1d6;box-shadow:inset 0 0 0 1px #e3e2e7"></div>
<div style="left:687px;top:287px;width:59px;height:36px;background:#e6e6e6;box-shadow:inset 0 0 0 1px #f6f6f6"></div>
<div style="left:687px;top:287px;width:4px;height:36px;background:#6464ff"></div>
<div style="left:691px;top:287px;width:1px;height:36px;background:#f6f6f6"></div>
<span class="val" style="left:687px;top:300px;width:57px">2</span>
<div style="left:747px;top:287px;width:59px;height:36px;background:#d2d1d6;box-shadow:inset 0 0 0 1px #e3e2e7"></div>
<div style="left:1px;top:324px;width:28px;height:36px;background:#d2d1d6;box-shadow:inset 0 0 0 1px #e3e2e7"></div>
<span class="rh" style="left:0px;top:337px;width:29px">8a</span>
<div style="left:30px;top:324px;width:58px;height:36px;background:#e6e6e6;box-shadow:inset 0 0 0 1px #f6f6f6"></div>
<div style="left:30px;top:324px;width:4px;height:36px;background:#ffc864"></div>
<div style="left:34px;top:324px;width:1px;height:36px;background:#f6f6f6"></div>
<span class="val" style="left:30px;top:337px;width:56px">3</span>
<div style="left:89px;top:324px;width:59px;height:36px;background:#e6e6e6;box-shadow:inset 0 0 0 1px #f6f6f6"></div>
<div style="left:89px;top:324px;width:4px;height:36px;background:#ffc864"></div>
<div style="left:93px;top:324px;width:1px;height:36px;background:#f6f6f6"></div>
<span class="val" style="left:89px;top:337px;width:57px">2</span>
<div style="left:149px;top:324px;width:59px;height:36px;background:#e6e6e6;box-shadow:inset 0 0 0 1px #f6f6f6"></div>
<div style="left:149px;top:324px;width:4px;height:36px;background:#fffcc6"></div>
<div style="left:153px;top:324px;width:1px;height:36px;background:#f6f6f6"></div>
<span class="val" style="left:149px;top:337px;width:57px">4</span>
<div style="left:209px;top:324px;width:59px;height:36px;background:#d2d1d6;box-shadow:inset 0 0 0 1px #e3e2e7"></div>
<div style="left:269px;top:324px;width:58px;height:36px;background:#e6e6e6;box-shadow:inset 0 0 0 1px #f6f6f6"></div>
<div style="left:269px;top:324px;width:4px;height:36px;background:#66ffff"></div>
<div style="left:273px;top:324px;width:1px;height:36px;background:#f6f6f6"></div>
<span class="val" style="left:269px;top:337px;width:56px">4</span>
<div style="left:328px;top:324px;width:59px;height:36px;background:#e6e6e6;box-shadow:inset 0 0 0 1px #f6f6f6"></div>
<div style="left:328px;top:324px;width:4px;height:36px;background:#66ffff"></div>
<div style="left:332px;top:324px;width:1px;height:36px;background:#f6f6f6"></div>
<span class="val" style="left:328px;top:337px;width:57px">2</span>
<div style="left:388px;top:324px;width:59px;height:36px;background:#e6e6e6;box-shadow:inset 0 0 0 1px #f6f6f6"></div>
<div style="left:388px;top:324px;width:4px;height:36px;background:#ffc864"></div>
<div style="left:392px;top:324px;width:1px;height:36px;background:#f6f6f6"></div>
<span class="val" style="left:388px;top:337px;width:57px">2</span>
<div style="left:448px;top:324px;width:59px;height:36px;background:#e6e6e6;box-shadow:inset 0 0 0 1px #f6f6f6"></div>
<div style="left:448px;top:324px;width:4px;height:36px;background:#ffc864"></div>
<div style="left:452px;top:324px;width:1px;height:36px;background:#f6f6f6"></div>
<span class="val" style="left:448px;top:337px;width:57px">1</span>
<div style="left:508px;top:324px;width:59px;height:36px;background:#e6e6e6;box-shadow:inset 0 0 0 1px #f6f6f6"></div>
<div style="left:508px;top:324px;width:4px;height:36px;background:#33c433"></div>
<div style="left:512px;top:324px;width:1px;height:36px;background:#f6f6f6"></div>
<span class="val" style="left:508px;top:337px;width:57px">2</span>
<div style="left:568px;top:324px;width:58px;height:36px;background:#e6e6e6;box-shadow:inset 0 0 0 1px #f6f6f6"></div>
<div style="left:568px;top:324px;width:4px;height:36px;background:#dcff96"></div>
<div style="left:572px;top:324px;width:1px;height:36px;background:#f6f6f6"></div>
<span class="val" style="left:568px;top:337px;width:56px">2</span>
<div style="left:627px;top:324px;width:59px;height:36px;background:#e6e6e6;box-shadow:inset 0 0 0 1px #f6f6f6"></div>
<div style="left:627px;top:324px;width:4px;height:36px;background:#6464ff"></div>
<div style="left:631px;top:324px;width:1px;height:36px;background:#f6f6f6"></div>
<span class="val" style="left:627px;top:337px;width:57px">2</span>
<div style="left:687px;top:324px;width:59px;height:36px;background:#e6e6e6;box-shadow:inset 0 0 0 1px #f6f6f6"></div>
<div style="left:687px;top:324px;width:4px;height:36px;background:#6464ff"></div>
<div style="left:691px;top:324px;width:1px;height:36px;background:#f6f6f6"></div>
<span class="val" style="left:687px;top:337px;width:57px">2</span>
<div style="left:747px;top:324px;width:59px;height:36px;background:#e6e6e6;box-shadow:inset 0 0 0 1px #f6f6f6"></div>
<div style="left:747px;top:324px;width:4px;height:36px;background:#8cf36a"></div>
<div style="left:751px;top:324px;width:1px;height:36px;background:#f6f6f6"></div>
<div style="left:1px;top:361px;width:28px;height:36px;background:#d2d1d6;box-shadow:inset 0 0 0 1px #e3e2e7"></div>
<span class="rh" style="left:0px;top:374px;width:29px">8б</span>
<div style="left:30px;top:361px;width:58px;height:36px;background:#e6e6e6;box-shadow:inset 0 0 0 1px #f6f6f6"></div>
<div style="left:30px;top:361px;width:4px;height:36px;background:#ffc864"></div>
<div style="left:34px;top:361px;width:1px;height:36px;background:#f6f6f6"></div>
<span class="val" style="left:30px;top:374px;width:56px">3</span>
<div style="left:89px;top:361px;width:59px;height:36px;background:#e6e6e6;box-shadow:inset 0 0 0 1px #f6f6f6"></div>
<div style="left:89px;top:361px;width:4px;height:36px;background:#ffc864"></div>
<div style="left:93px;top:361px;width:1px;height:36px;background:#f6f6f6"></div>
<span class="val" style="left:89px;top:374px;width:57px">2</span>
<div style="left:149px;top:361px;width:59px;height:36px;background:#e6e6e6;box-shadow:inset 0 0 0 1px #f6f6f6"></div>
<div style="left:149px;top:361px;width:4px;height:36px;background:#5e9a0a"></div>
<div style="left:153px;top:361px;width:1px;height:36px;background:#f6f6f6"></div>
<span class="val" style="left:149px;top:374px;width:57px">4</span>
<div style="left:209px;top:361px;width:59px;height:36px;background:#d2d1d6;box-shadow:inset 0 0 0 1px #e3e2e7"></div>
<div style="left:269px;top:361px;width:58px;height:36px;background:#e6e6e6;box-shadow:inset 0 0 0 1px #f6f6f6"></div>
<div style="left:269px;top:361px;width:4px;height:36px;background:#66ffff"></div>
<div style="left:273px;top:361px;width:1px;height:36px;background:#f6f6f6"></div>
<span class="val" style="left:269px;top:374px;width:56px">4</span>
<div style="left:328px;top:361px;width:59px;height:36px;background:#e6e6e6;box-shadow:inset 0 0 0 1px #f6f6f6"></div>
<div style="left:328px;top:361px;width:4px;height:36px;background:#66ffff"></div>
<div style="left:332px;top:361px;width:1px;height:36px;background:#f6f6f6"></div>
<span class="val" style="left:328px;top:374px;width:57px">2</span>
<div style="left:388px;top:361px;width:59px;height:36px;background:#e6e6e6;box-shadow:inset 0 0 0 1px #f6f6f6"></div>
<div style="left:388px;top:361px;width:4px;height:36px;background:#ffc864"></div>
<div style="left:392px;top:361px;width:1px;height:36px;background:#f6f6f6"></div>
<span class="val" style="left:388px;top:374px;width:57px">2</span>
<div style="left:448px;top:361px;width:59px;height:36px;background:#e6e6e6;box-shadow:inset 0 0 0 1px #f6f6f6"></div>
<div style="left:448px;top:361px;width:4px;height:36px;background:#ffc864"></div>
<div style="left:452px;top:361px;width:1px;height:36px;background:#f6f6f6"></div>
<span class="val" style="left:448px;top:374px;width:57px">1</span>
<div style="left:508px;top:361px;width:59px;height:36px;background:#e6e6e6;box-shadow:inset 0 0 0 1px #f6f6f6"></div>
<div style="left:508px;top:361px;width:4px;height:36px;background:#33c433"></div>
<div style="left:512px;top:361px;width:1px;height:36px;background:#f6f6f6"></div>
<span class="val" style="left:508px;top:374px;width:57px">2</span>
<div style="left:568px;top:361px;width:58px;height:36px;background:#e6e6e6;box-shadow:inset 0 0 0 1px #f6f6f6"></div>
<div style="left:568px;top:361px;width:4px;height:36px;background:#dcff96"></div>
<div style="left:572px;top:361px;width:1px;height:36px;background:#f6f6f6"></div>
<span class="val" style="left:568px;top:374px;width:56px">2</span>
<div style="left:627px;top:361px;width:59px;height:36px;background:#e6e6e6;box-shadow:inset 0 0 0 1px #f6f6f6"></div>
<div style="left:627px;top:361px;width:4px;height:36px;background:#6464ff"></div>
<div style="left:631px;top:361px;width:1px;height:36px;background:#f6f6f6"></div>
<span class="val" style="left:627px;top:374px;width:57px">2</span>
<div style="left:687px;top:361px;width:59px;height:36px;background:#e6e6e6;box-shadow:inset 0 0 0 1px #f6f6f6"></div>
<div style="left:687px;top:361px;width:4px;height:36px;background:#6464ff"></div>
<div style="left:691px;top:361px;width:1px;height:36px;background:#f6f6f6"></div>
<span class="val" style="left:687px;top:374px;width:57px">2</span>
<div style="left:747px;top:361px;width:59px;height:36px;background:#e6e6e6;box-shadow:inset 0 0 0 1px #f6f6f6"></div>
<div style="left:747px;top:361px;width:4px;height:36px;background:#8cf36a"></div>
<div style="left:751px;top:361px;width:1px;height:36px;background:#f6f6f6"></div>
<div style="left:1px;top:398px;width:28px;height:36px;background:#d2d1d6;box-shadow:inset 0 0 0 1px #e3e2e7"></div>
<span class="rh" style="left:0px;top:411px;width:29px">9a</span>
<div style="left:30px;top:398px;width:58px;height:36px;background:#e6e6e6;box-shadow:inset 0 0 0 1px #f6f6f6"></div>
<div style="left:30px;top:398px;width:4px;height:36px;background:#ffc864"></div>
<div style="left:34px;top:398px;width:1px;height:36px;background:#f6f6f6"></div>
<span class="val" style="left:30px;top:411px;width:56px">3</span>
<div style="left:89px;top:398px;width:59px;height:36px;background:#e6e6e6;box-shadow:inset 0 0 0 1px #f6f6f6"></div>
<div style="left:89px;top:398px;width:4px;height:36px;background:#ffc864"></div>
<div style="left:93px;top:398px;width:1px;height:36px;background:#f6f6f6"></div>
<span class="val" style="left:89px;top:411px;width:57px">2</span>
<div style="left:149px;top:398px;width:59px;height:36px;background:#e6e6e6;box-shadow:inset 0 0 0 1px #f6f6f6"></div>
<div style="left:149px;top:398px;width:4px;height:36px;background:#5e9a0a"></div>
<div style="left:153px;top:398px;width:1px;height:36px;background:#f6f6f6"></div>
<span class="val" style="left:149px;top:411px;width:57px">4</span>
<div style="left:209px;top:398px;width:59px;height:36px;background:#d2d1d6;box-shadow:inset 0 0 0 1px #e3e2e7"></div>
<div style="left:269px;top:398px;width:58px;height:36px;background:#e6e6e6;box-shadow:inset 0 0 0 1px #f6f6f6"></div>
<div style="left:269px;top:398px;width:4px;height:36px;background:#66ffff"></div>
<div style="left:273px;top:398px;width:1px;height:36px;background:#f6f6f6"></div>
<span class="val" style="left:269px;top:411px;width:56px">4</span>
<div style="left:328px;top:398px;width:59px;height:36px;background:#e6e6e6;box-shadow:inset 0 0 0 1px #f6f6f6"></div>
<div style="left:328px;top:398px;width:4px;height:36px;background:#66ffff"></div>
<div style="left:332px;top:398px;width:1px;height:36px;background:#f6f6f6"></div>
<span class="val" style="left:328px;top:411px;width:57px">2</span>
<div style="left:388px;top:398px;width:59px;height:36px;background:#e6e6e6;box-shadow:inset 0 0 0 1px #f6f6f6"></div>
<div style="left:388px;top:398px;width:4px;height:36px;background:#ffc864"></div>
<div style="left:392px;top:398px;width:1px;height:36px;background:#f6f6f6"></div>
<span class="val" style="left:388px;top:411px;width:57px">2</span>
<div style="left:448px;top:398px;width:59px;height:36px;background:#e6e6e6;box-shadow:inset 0 0 0 1px #f6f6f6"></div>
<div style="left:448px;top:398px;width:4px;height:36px;background:#ffc864"></div>
<div style="left:452px;top:398px;width:1px;height:36px;background:#f6f6f6"></div>
<span class="val" style="left:448px;top:411px;width:57px">1</span>
<div style="left:508px;top:398px;width:59px;height:36px;background:#e6e6e6;box-shadow:inset 0 0 0 1px #f6f6f6"></div>
<div style="left:508px;top:398px;width:4px;height:36px;background:#33c433"></div>
<div style="left:512px;top:398px;width:1px;height:36px;background:#f6f6f6"></div>
<span class="val" style="left:508px;top:411px;width:57px">2</span>
<div style="left:568px;top:398px;width:58px;height:36px;background:#e6e6e6;box-shadow:inset 0 0 0 1px #f6f6f6"></div>
<div style="left:568px;top:398px;width:4px;height:36px;background:#dcff96"></div>
<div style="left:572px;top:398px;width:1px;height:36px;background:#f6f6f6"></div>
<span class="val" style="left:568px;top:411px;width:56px">2</span>
<div style="left:627px;top:398px;width:59px;height:36px;background:#e6e6e6;box-shadow:inset 0 0 0 1px #f6f6f6"></div>
<div style="left:627px;top:398px;width:4px;height:36px;background:#6464ff"></div>
<div style="left:631px;top:398px;width:1px;height:36px;background:#f6f6f6"></div>
<span class="val" style="left:627px;top:411px;width:57px">2</span>
<div style="left:687px;top:398px;width:59px;height:36px;background:#e6e6e6;box-shadow:inset 0 0 0 1px #f6f6f6"></div>
<div style="left:687px;top:398px;width:4px;height:36px;background:#6464ff"></div>
<div style="left:691px;top:398px;width:1px;height:36px;background:#f6f6f6"></div>
<span class="val" style="left:687px;top:411px;width:57px">2</span>
<div style="left:747px;top:398px;width:59px;height:36px;background:#e6e6e6;box-shadow:inset 0 0 0 1px #f6f6f6"></div>
<div style="left:747px;top:398px;width:4px;height:36px;background:#8cf36a"></div>
<div style="left:751px;top:398px;width:1px;height:36px;background:#f6f6f6"></div>
<span class="hd" style="left:30px;top:9px;width:58px">Рус.яз.</span>
<span class="hd" style="left:89px;top:9px;width:59px">Лит.</span>
<span class="hd" style="left:149px;top:9px;width:59px">Англ.яз.</span>
<span class="hd" style="left:209px;top:9px;width:59px">Мат.</span>
<span class="hd" style="left:269px;top:9px;width:58px">Алг.</span>
<span class="hd" style="left:328px;top:9px;width:59px">Геомет.</span>
<span class="hd" style="left:388px;top:9px;width:59px">Истор.</span>
<span class="hd" style="left:448px;top:9px;width:59px">Обществ.</span>
<span class="hd" style="left:508px;top:9px;width:59px">Геогр.</span>
<span class="hd" style="left:568px;top:9px;width:58px">Физ.</span>
<span class="hd" style="left:627px;top:9px;width:59px">Хим.</span>
<span class="hd" style="left:687px;top:9px;width:59px">Биол.</span>
<span class="hd" style="left:747px;top:9px;width:59px">МХК</span>
<div style="left:29px;top:0px;width:1px;height:430px;background:#000"></div>
<div style="left:88px;top:0px;width:1px;height:430px;background:#000"></div>
<div style="left:148px;top:0px;width:1px;height:430px;background:#000"></div>
<div style="left:208px;top:0px;width:1px;height:430px;background:#000"></div>
<div style="left:268px;top:0px;width:1px;height:430px;background:#000"></div>
<div style="left:327px;top:0px;width:1px;height:430px;background:#000"></div>
<div style="left:387px;top:0px;width:1px;height:430px;background:#000"></div>
<div style="left:447px;top:0px;width:1px;height:430px;background:#000"></div>
<div style="left:507px;top:0px;width:1px;height:430px;background:#000"></div>
<div style="left:567px;top:0px;width:1px;height:430px;background:#000"></div>
<div style="left:626px;top:0px;width:1px;height:430px;background:#000"></div>
<div style="left:686px;top:0px;width:1px;height:430px;background:#000"></div>
<div style="left:746px;top:0px;width:1px;height:430px;background:#000"></div>
<div style="left:0px;top:27px;width:795px;height:1px;background:#000"></div>
<div style="left:0px;top:64px;width:795px;height:1px;background:#000"></div>
<div style="left:0px;top:101px;width:795px;height:1px;background:#000"></div>
<div style="left:0px;top:138px;width:795px;height:1px;background:#000"></div>
<div style="left:0px;top:175px;width:795px;height:1px;background:#000"></div>
<div style="left:0px;top:212px;width:795px;height:1px;background:#000"></div>
<div style="left:0px;top:249px;width:795px;height:1px;background:#000"></div>
<div style="left:0px;top:286px;width:795px;height:1px;background:#000"></div>
<div style="left:0px;top:323px;width:795px;height:1px;background:#000"></div>
<div style="left:0px;top:360px;width:795px;height:1px;background:#000"></div>
<div style="left:0px;top:397px;width:795px;height:1px;background:#000"></div>
<div style="left:0px;top:0px;width:795px;height:1px;background:#6e6e6e"></div>
<div style="left:0px;top:0px;width:1px;height:430px;background:#6e6e6e"></div>
<div style="left:36px;top:341px;width:2px;height:38px;background:#000"></div>
<div style="left:95px;top:341px;width:2px;height:38px;background:#000"></div>
<div style="left:275px;top:341px;width:2px;height:38px;background:#000"></div>
<div style="left:334px;top:341px;width:2px;height:38px;background:#000"></div>
<div style="left:394px;top:341px;width:2px;height:38px;background:#000"></div>
<div style="left:454px;top:341px;width:2px;height:38px;background:#000"></div>
<div style="left:514px;top:341px;width:2px;height:38px;background:#000"></div>
<div style="left:574px;top:341px;width:2px;height:38px;background:#000"></div>
<div style="left:633px;top:341px;width:2px;height:38px;background:#000"></div>
<div style="left:693px;top:341px;width:2px;height:38px;background:#000"></div>
<div style="left:753px;top:341px;width:2px;height:38px;background:#000"></div>
<div style="left:95px;top:415px;width:2px;height:20px;background:#000"></div>
<div style="left:275px;top:415px;width:2px;height:20px;background:#000"></div>
<div style="left:334px;top:415px;width:2px;height:20px;background:#000"></div>
<div style="left:394px;top:415px;width:2px;height:20px;background:#000"></div>
<div style="left:454px;top:415px;width:2px;height:20px;background:#000"></div>
<div style="left:514px;top:415px;width:2px;height:20px;background:#000"></div>
<div style="left:574px;top:415px;width:2px;height:20px;background:#000"></div>
<div style="left:633px;top:415px;width:2px;height:20px;background:#000"></div>
<div style="left:693px;top:415px;width:2px;height:20px;background:#000"></div>
<div style="left:753px;top:415px;width:2px;height:20px;background:#000"></div>
</div>
<!-- strip below grid -->
<div style="left:4px;top:606px;width:796px;height:1px;background:#fcfcfc;"></div>
<div style="left:4px;top:607px;width:796px;height:4px;background:#f0f0f0;"></div>
<div style="left:4px;top:611px;width:796px;height:1px;background:#a4a4a4;"></div>
<div style="left:4px;top:612px;width:796px;height:1px;background:#6a6a6a;"></div>
<!-- bottom panel -->
<div style="left:5px;top:613px;width:298px;height:109px;background:#777890;"></div>
<div style="left:4px;top:612px;width:1px;height:110px;background:#a4a4a4;"></div>
<div style="left:5px;top:612px;width:1px;height:110px;background:#6a6a6a;"></div>
<div style="left:303px;top:613px;width:497px;height:109px;background:#d2d1d6;"></div>
<svg style="left:0;top:0" width="800" height="748" viewBox="0 0 800 748">
<defs>
<linearGradient id="cgd" x1="0" x2="0" y1="0" y2="1"><stop offset="0" stop-color="#fbfbfb"/><stop offset="0.45" stop-color="#dedede"/><stop offset="1" stop-color="#dadada"/></linearGradient>
<linearGradient id="cgl" x1="0" x2="0" y1="0" y2="1"><stop offset="0" stop-color="#fdfdfd"/><stop offset="0.45" stop-color="#eeeeee"/><stop offset="1" stop-color="#ebebeb"/></linearGradient>
</defs>
<rect x="315" y="625" width="48" height="38" fill="#8c8c8c"/>
<rect x="316" y="626" width="46" height="36" fill="#dcdcdc"/>
<rect x="313" y="623" width="48" height="38" fill="#8c8c8c"/>
<rect x="314" y="624" width="46" height="36" fill="#dcdcdc"/>
<rect x="311" y="621" width="48" height="38" fill="#8c8c8c"/>
<rect x="312" y="622" width="46" height="36" fill="#dcdcdc"/>
<rect x="309" y="619" width="48" height="38" fill="#8c8c8c"/>
<rect x="310" y="620" width="46" height="36" fill="#dcdcdc"/>
<rect x="307" y="617" width="47" height="37" fill="url(#cgd)"/>
<rect x="307" y="617" width="47" height="1" fill="#fff"/>
<rect x="307" y="617" width="1" height="37" fill="#fff"/>
<rect x="354" y="617" width="1" height="38" fill="#000"/>
<rect x="307" y="654" width="48" height="1" fill="#000"/>
<rect x="370" y="625" width="48" height="38" fill="#8c8c8c"/>
<rect x="371" y="626" width="46" height="36" fill="#dcdcdc"/>
<rect x="368" y="623" width="48" height="38" fill="#8c8c8c"/>
<rect x="369" y="624" width="46" height="36" fill="#dcdcdc"/>
<rect x="366" y="621" width="48" height="38" fill="#8c8c8c"/>
<rect x="367" y="622" width="46" height="36" fill="#dcdcdc"/>
<rect x="364" y="619" width="48" height="38" fill="#8c8c8c"/>
<rect x="365" y="620" width="46" height="36" fill="#dcdcdc"/>
<rect x="362" y="617" width="47" height="37" fill="url(#cgd)"/>
<rect x="362" y="617" width="47" height="1" fill="#fff"/>
<rect x="362" y="617" width="1" height="37" fill="#fff"/>
<rect x="409" y="617" width="1" height="38" fill="#000"/>
<rect x="362" y="654" width="48" height="1" fill="#000"/>
<rect x="425" y="625" width="48" height="38" fill="#8c8c8c"/>
<rect x="426" y="626" width="46" height="36" fill="#dcdcdc"/>
<rect x="423" y="623" width="48" height="38" fill="#8c8c8c"/>
<rect x="424" y="624" width="46" height="36" fill="#dcdcdc"/>
<rect x="421" y="621" width="48" height="38" fill="#8c8c8c"/>
<rect x="422" y="622" width="46" height="36" fill="#dcdcdc"/>
<rect x="419" y="619" width="48" height="38" fill="#8c8c8c"/>
<rect x="420" y="620" width="46" height="36" fill="#dcdcdc"/>
<rect x="417" y="617" width="47" height="37" fill="url(#cgd)"/>
<rect x="417" y="617" width="47" height="1" fill="#fff"/>
<rect x="417" y="617" width="1" height="37" fill="#fff"/>
<rect x="464" y="617" width="1" height="38" fill="#000"/>
<rect x="417" y="654" width="48" height="1" fill="#000"/>
<rect x="480" y="625" width="48" height="38" fill="#8c8c8c"/>
<rect x="481" y="626" width="46" height="36" fill="#dcdcdc"/>
<rect x="478" y="623" width="48" height="38" fill="#8c8c8c"/>
<rect x="479" y="624" width="46" height="36" fill="#dcdcdc"/>
<rect x="476" y="621" width="48" height="38" fill="#8c8c8c"/>
<rect x="477" y="622" width="46" height="36" fill="#dcdcdc"/>
<rect x="474" y="619" width="48" height="38" fill="#8c8c8c"/>
<rect x="475" y="620" width="46" height="36" fill="#dcdcdc"/>
<rect x="472" y="617" width="47" height="37" fill="url(#cgl)"/>
<rect x="472" y="617" width="47" height="1" fill="#fff"/>
<rect x="472" y="617" width="1" height="37" fill="#fff"/>
<rect x="519" y="617" width="1" height="38" fill="#000"/>
<rect x="472" y="654" width="48" height="1" fill="#000"/>
<rect x="535" y="625" width="48" height="38" fill="#8c8c8c"/>
<rect x="536" y="626" width="46" height="36" fill="#dcdcdc"/>
<rect x="533" y="623" width="48" height="38" fill="#8c8c8c"/>
<rect x="534" y="624" width="46" height="36" fill="#dcdcdc"/>
<rect x="531" y="621" width="48" height="38" fill="#8c8c8c"/>
<rect x="532" y="622" width="46" height="36" fill="#dcdcdc"/>
<rect x="529" y="619" width="48" height="38" fill="#8c8c8c"/>
<rect x="530" y="620" width="46" height="36" fill="#dcdcdc"/>
<rect x="527" y="617" width="47" height="37" fill="url(#cgd)"/>
<rect x="527" y="617" width="47" height="1" fill="#fff"/>
<rect x="527" y="617" width="1" height="37" fill="#fff"/>
<rect x="574" y="617" width="1" height="38" fill="#000"/>
<rect x="527" y="654" width="48" height="1" fill="#000"/>
<rect x="590" y="625" width="48" height="38" fill="#8c8c8c"/>
<rect x="591" y="626" width="46" height="36" fill="#dcdcdc"/>
<rect x="588" y="623" width="48" height="38" fill="#8c8c8c"/>
<rect x="589" y="624" width="46" height="36" fill="#dcdcdc"/>
<rect x="586" y="621" width="48" height="38" fill="#8c8c8c"/>
<rect x="587" y="622" width="46" height="36" fill="#dcdcdc"/>
<rect x="584" y="619" width="48" height="38" fill="#8c8c8c"/>
<rect x="585" y="620" width="46" height="36" fill="#dcdcdc"/>
<rect x="582" y="617" width="47" height="37" fill="url(#cgl)"/>
<rect x="582" y="617" width="47" height="1" fill="#fff"/>
<rect x="582" y="617" width="1" height="37" fill="#fff"/>
<rect x="629" y="617" width="1" height="38" fill="#000"/>
<rect x="582" y="654" width="48" height="1" fill="#000"/>
<rect x="645" y="625" width="48" height="38" fill="#8c8c8c"/>
<rect x="646" y="626" width="46" height="36" fill="#dcdcdc"/>
<rect x="643" y="623" width="48" height="38" fill="#8c8c8c"/>
<rect x="644" y="624" width="46" height="36" fill="#dcdcdc"/>
<rect x="641" y="621" width="48" height="38" fill="#8c8c8c"/>
<rect x="642" y="622" width="46" height="36" fill="#dcdcdc"/>
<rect x="639" y="619" width="48" height="38" fill="#8c8c8c"/>
<rect x="640" y="620" width="46" height="36" fill="#dcdcdc"/>
<rect x="637" y="617" width="47" height="37" fill="url(#cgl)"/>
<rect x="637" y="617" width="47" height="1" fill="#fff"/>
<rect x="637" y="617" width="1" height="37" fill="#fff"/>
<rect x="684" y="617" width="1" height="38" fill="#000"/>
<rect x="637" y="654" width="48" height="1" fill="#000"/>
<rect x="700" y="625" width="48" height="38" fill="#8c8c8c"/>
<rect x="701" y="626" width="46" height="36" fill="#dcdcdc"/>
<rect x="698" y="623" width="48" height="38" fill="#8c8c8c"/>
<rect x="699" y="624" width="46" height="36" fill="#dcdcdc"/>
<rect x="696" y="621" width="48" height="38" fill="#8c8c8c"/>
<rect x="697" y="622" width="46" height="36" fill="#dcdcdc"/>
<rect x="694" y="619" width="48" height="38" fill="#8c8c8c"/>
<rect x="695" y="620" width="46" height="36" fill="#dcdcdc"/>
<rect x="692" y="617" width="47" height="37" fill="url(#cgl)"/>
<rect x="692" y="617" width="47" height="1" fill="#fff"/>
<rect x="692" y="617" width="1" height="37" fill="#fff"/>
<rect x="739" y="617" width="1" height="38" fill="#000"/>
<rect x="692" y="654" width="48" height="1" fill="#000"/>
<rect x="751" y="621" width="48" height="38" fill="#8c8c8c"/>
<rect x="752" y="622" width="46" height="36" fill="#dcdcdc"/>
<rect x="749" y="619" width="48" height="38" fill="#8c8c8c"/>
<rect x="750" y="620" width="46" height="36" fill="#dcdcdc"/>
<rect x="747" y="617" width="47" height="37" fill="url(#cgl)"/>
<rect x="747" y="617" width="47" height="1" fill="#fff"/>
<rect x="747" y="617" width="1" height="37" fill="#fff"/>
<rect x="794" y="617" width="1" height="38" fill="#000"/>
<rect x="747" y="654" width="48" height="1" fill="#000"/>
<path d="M309.8 702.8 Q310 701 314 700 L321 697.3 L328 700 Q332.5 701 332.8 702.8 Z" fill="#e0ecf4" stroke="#7a8aa0" stroke-width="0.8"/>
<rect x="310" y="702.8" width="22.5" height="1.2" fill="#8a9ab0"/>
<rect x="311.2" y="704" width="2.6" height="10.5" fill="#a8b8cc" stroke="#7a8aa0" stroke-width="0.6"/>
<rect x="316.8" y="704" width="2.8" height="10.5" fill="#a8b8cc" stroke="#7a8aa0" stroke-width="0.6"/>
<rect x="322.6" y="704" width="2.8" height="10.5" fill="#a8b8cc" stroke="#7a8aa0" stroke-width="0.6"/>
<rect x="328.8" y="704" width="2.8" height="10.5" fill="#a8b8cc" stroke="#7a8aa0" stroke-width="0.6"/>
<rect x="310.2" y="714.4" width="22" height="2.6" fill="#a8b8cc" stroke="#7a8aa0" stroke-width="0.6"/>
<rect x="309.3" y="717" width="23.7" height="2.6" fill="#e0ecf4" stroke="#7a8aa0" stroke-width="0.8"/>
<g transform="translate(-63.09 647.76) scale(0.77)"><path d="M557.2 86.5 Q557.5 79.5 565 79.3 Q572.5 79.5 572.8 86.5 Z" fill="#f4a3ac" stroke="#e04656" stroke-width="0.9"/>
<path d="M560 78.3 Q558.5 62 566.5 62 Q573.5 62.5 573 72 L571 78.3 Z" fill="#c37a42"/>
<ellipse cx="567" cy="74" rx="4.3" ry="5" fill="#f8d28c"/>
<path d="M564 93.3 Q564.5 85 576.5 85 Q588.5 85 589 93.3 Z" fill="#b8e1c2" stroke="#2c8c3e" stroke-width="0.9"/>
<path d="M569.5 78.5 Q568.5 64.5 577 64.5 Q585.5 64.8 584 78.5 Z" fill="#f2ca7c"/>
<ellipse cx="576.5" cy="77.5" rx="5.5" ry="6.8" fill="#fcdc9e"/></g>
<g transform="translate(-90.14 647.50) scale(0.775)"><path d="M666.4 79.8 V88 Q666.4 91 675 91 Q683.7 91 683.7 88 V79.8 Z" fill="#4a4a4c"/>
<path d="M675 64.9 L690 75.3 L675 84.9 L659.8 75.3 Z" fill="#5b5d61" stroke="#1b2131" stroke-width="1.4" stroke-linejoin="round"/>
<path d="M675 75 L663.5 77.8 V88" fill="none" stroke="#f2a222" stroke-width="1.3"/>
<path d="M663.5 86 L665 89 L663.5 91 L662 89 Z" fill="#f2a222"/></g>
<g transform="translate(92.42 648.58) scale(0.76)"><rect x="510.5" y="64.5" width="23" height="27" rx="1.5" fill="#8ab5ee" stroke="#5b89c9" stroke-width="1"/>
<rect x="511" y="65" width="3" height="26" fill="#5b89c9"/>
<rect x="517" y="70.4" width="12" height="7.6" fill="#fff"/>
<rect x="519" y="72.7" width="8" height="1" fill="#9aabc2"/>
<rect x="519" y="74.9" width="8" height="1" fill="#9aabc2"/></g>
<g transform="translate(60.09 647.79) scale(0.775)"><rect x="611.5" y="64.5" width="23" height="27" fill="#f2b282" stroke="#b26c42" stroke-width="1"/>
<rect x="622.8" y="66.4" width="9.6" height="24.6" fill="#5a484c"/>
<rect x="628" y="66.4" width="4" height="24.6" fill="#7a6268"/>
<path d="M613.6 65.1 L622.5 62.2 V93.4 L613.6 91.6 Z" fill="#fdc9a2" stroke="#b26c42" stroke-width="1"/>
<circle cx="619" cy="78.8" r="1" fill="#a06040"/></g>
</svg>
<span style="left:307px;top:631px;width:47px;text-align:center;font-size:11px;color:#8a8a8a;">Рус.яз.</span>
<span style="left:362px;top:631px;width:47px;text-align:center;font-size:11px;color:#8a8a8a;">Рус.яз.</span>
<span style="left:417px;top:631px;width:47px;text-align:center;font-size:11px;color:#8a8a8a;">Рус.яз.</span>
<span style="left:472px;top:631px;width:47px;text-align:center;font-size:11px;color:#8a8a8a;">Рус.яз.</span>
<span style="left:527px;top:631px;width:47px;text-align:center;font-size:11px;color:#8a8a8a;">Рус.яз.</span>
<span style="left:582px;top:631px;width:47px;text-align:center;font-size:11px;color:#8a8a8a;">Рус.яз.</span>
<span style="left:637px;top:631px;width:47px;text-align:center;font-size:11px;color:#8a8a8a;">Рус.яз.</span>
<span style="left:692px;top:631px;width:47px;text-align:center;font-size:11px;color:#8a8a8a;">Рус.яз.</span>
<span style="left:747px;top:631px;width:47px;text-align:center;font-size:11px;color:#8a8a8a;">Рус.яз.</span>
<div style="left:4px;top:722px;width:796px;height:2px;background:#fafafa;"></div>
<div style="left:4px;top:724px;width:796px;height:1px;background:#8a93a8;"></div>
<div style="left:4px;top:725px;width:796px;height:20px;background:#f0eded;"></div>
<span style="left:7px;top:731px;font-size:11.3px;color:#1a1670;-webkit-text-stroke:0.2px #1a1670;">Ready</span>
</body></html>
